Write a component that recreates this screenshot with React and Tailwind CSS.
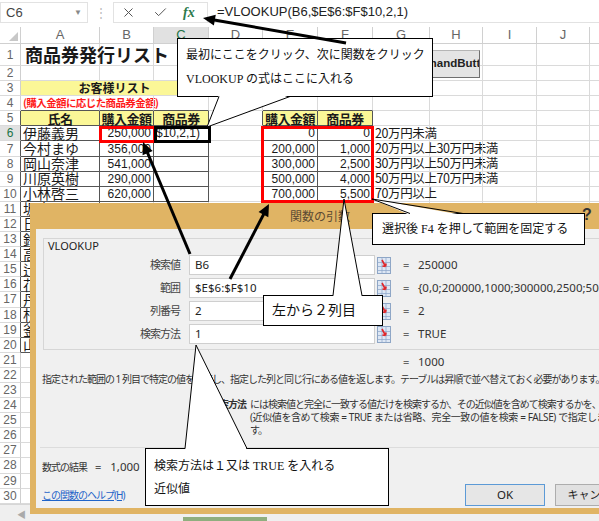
import { X, Check } from 'lucide-react';

const COLS = [
  { k: 'A', w: 'w-[79px]' },
  { k: 'B', w: 'w-[54px]' },
  { k: 'C', w: 'w-[55px]' },
  { k: 'D', w: 'w-[54px]' },
  { k: 'E', w: 'w-[55px]' },
  { k: 'F', w: 'w-[55px]' },
  { k: 'G', w: 'w-[57px]' },
  { k: 'H', w: 'w-[53px]' },
  { k: 'I', w: 'w-[54px]' },
  { k: 'J', w: 'w-[53px]' },
  { k: 'K', w: 'w-[40px]' },
];

const customers = [
  ['伊藤義男', '250,000'],
  ['今村まゆ', '356,000'],
  ['岡山奈津', '541,000'],
  ['川原英樹', '290,000'],
  ['小林啓三', '620,000'],
];

const rates = [
  ['0', '0', '20万円未満'],
  ['200,000', '1,000', '20万円以上30万円未満'],
  ['300,000', '2,500', '30万円以上50万円未満'],
  ['500,000', '4,000', '50万円以上70万円未満'],
  ['700,000', '5,500', '70万円以上'],
];

// rows 11-20 sit under the dialog, only the first glyph peeks out
const moreNames = ['坂本', '日野', '鈴木', '高橋', '辻', '花田', '丹羽', '杉山', '釜田', '山田'];

const NUM = "justify-end pr-[2px] font-['Liberation_Sans',sans-serif] text-[12px]";
const HEAD = 'bg-[#fbf797] justify-center font-bold text-[13px] tracking-[-0.5px]';

function inTable(r, ci) {
  if (ci <= 2 && r >= 5 && r <= 10) return true;
  if (ci === 0 && r >= 11 && r <= 20) return true;
  if ((ci === 4 || ci === 5) && r >= 5 && r <= 10) return true;
  return false;
}

function rowCells(r) {
  if (r === 1) return { A: { t: '商品券発行リスト', c: 'text-[18px] font-bold pl-[4px]' } };
  if (r === 3) return { A: { t: 'お客様リスト', c: 'bg-[#fbf797] justify-center font-bold text-[12px]', span: 3 } };
  if (r === 4)
    return { A: { t: '(購入金額に応じた商品券金額)', c: 'text-[10.5px] tracking-[-0.6px] text-[#ff1a1a] font-semibold pl-[2px]' } };
  if (r === 5)
    return {
      A: { t: '氏名', c: HEAD },
      B: { t: '購入金額', c: HEAD },
      C: { t: '商品券', c: HEAD },
      E: { t: '購入金額', c: HEAD },
      F: { t: '商品券', c: HEAD },
    };
  if (r >= 6 && r <= 10) {
    const [name, amount] = customers[r - 6];
    const [from, ticket, note] = rates[r - 6];
    return {
      A: { t: name, c: 'text-[14px] pl-[2px]' },
      B: { t: amount, c: NUM },
      C: r === 6 ? { t: '$10,2,1)', c: "font-['Liberation_Sans',sans-serif] text-[12px] pl-[2px]" } : null,
      E: { t: from, c: NUM },
      F: { t: ticket, c: NUM },
      G: { t: note, c: 'text-[12.5px] tracking-[-0.4px] pl-[2px]' },
    };
  }
  if (r >= 11 && r <= 20) return { A: { t: moreNames[r - 11], c: 'text-[14px] pl-[2px]' } };
  return {};
}

function SheetRow({ r }) {
  const cells = rowCells(r);
  const out = [];
  for (let i = 0; i < COLS.length; i++) {
    const cell = cells[COLS[i].k];
    const span = cell && cell.span ? cell.span : 1;
    const last = i + span - 1;
    const w = span === 3 ? 'w-[188px]' : COLS[i].w;
    const rightDark = inTable(r, last) || inTable(r, last + 1);
    const bottomDark = inTable(r, i) || inTable(r + 1, i);
    out.push(
      <div
        key={COLS[i].k}
        className={`shrink-0 flex items-center whitespace-nowrap border-r border-b ${w} ${
          rightDark ? 'border-r-[#555]' : 'border-r-[#dadada]'
        } ${bottomDark ? 'border-b-[#555]' : 'border-b-[#dadada]'} ${cell ? cell.c : ''}`}
      >
        {cell ? cell.t : ''}
      </div>
    );
    i += span - 1;
  }
  const active = r === 6;
  return (
    <div className={`flex ${r === 1 ? 'h-[22px]' : 'h-[15.1px]'}`}>
      <div
        className={`shrink-0 w-[21px] flex items-center justify-center border-r border-b border-b-[#dadada] font-['Liberation_Sans',sans-serif] text-[12px] ${
          inTable(r, 0) ? 'border-r-[#555]' : 'border-r-[#cfcfcf]'
        } ${active ? 'bg-[#e1e1e1] text-[#217346]' : 'text-[#666]'}`}
      >
        {r}
      </div>
      {out}
    </div>
  );
}

function FormulaBar() {
  return (
    <div className="h-[27px] flex items-start pt-[2px] font-['Liberation_Sans',sans-serif]">
      <div className="shrink-0 w-[88px] h-[21px] border border-[#e2e2e2] flex items-center justify-between pl-[5px] pr-[5px]">
        <span className="text-[13px] text-[#444]">C6</span>
        <span className="text-[8px] text-[#888]">▼</span>
      </div>
      <div className="shrink-0 w-[25px] h-[21px] flex items-center justify-center text-[12px] text-[#bbb]">⋮</div>
      <div className="shrink-0 w-[95px] h-[21px] border border-[#e2e2e2] flex items-center pl-[7px]">
        <X size={15} strokeWidth={1.6} className="text-[#555]" />
        <Check size={15} strokeWidth={1.6} className="ml-[17px] text-[#555]" />
        <span className="ml-[15px] font-['Liberation_Serif',serif] italic font-bold text-[14px] text-[#2c7a4b]">fx</span>
      </div>
      <div className="flex-1 h-[21px] border-b border-[#e2e2e2] flex items-center pl-[9px] text-[13px] text-[#222]">
        =VLOOKUP(B6,$E$6:$F$10,2,1)
      </div>
    </div>
  );
}

function ColumnHeader() {
  return (
    <div className="flex h-[17px] font-['Liberation_Sans',sans-serif]">
      <div className="shrink-0 w-[21px] border-r border-b border-[#d0d0d0] flex items-end justify-end pr-[2px] pb-[2px]">
        <svg width="9" height="9" viewBox="0 0 9 9">
          <polygon points="9,0 9,9 0,9" fill="#c8c8c8" />
        </svg>
      </div>
      {COLS.map((c) => (
        <div
          key={c.k}
          className={`shrink-0 ${c.w} border-r border-b border-[#d0d0d0] flex items-center justify-center text-[13px] ${
            c.k === 'C' ? 'bg-[#e1e1e1] text-[#217346]' : 'text-[#666]'
          }`}
        >
          {c.k}
        </div>
      ))}
    </div>
  );
}

function RefIcon() {
  return (
    <svg width="14" height="17" viewBox="0 0 14 17" className="shrink-0">
      <rect x="0.5" y="0.5" width="13" height="16" fill="#dde7f4" stroke="#8ea6c6" />
      <path d="M1 5.5h12M1 9.5h12M1 13.5h12M5 1v15M9 1v15" stroke="#8aa3c8" strokeWidth="0.7" />
      <path d="M5 3l3.5 6.5M8.5 9.5l-3 -0.5M8.5 9.5l0.5 -3" stroke="#e0262a" strokeWidth="1.6" fill="none" />
    </svg>
  );
}

function Dialog() {
  const args = [
    ['検索値', 'B6', '250000'],
    ['範囲', '$E$6:$F$10', '{0,0;200000,1000;300000,2500;500000,4000;700000,5500}'],
    ['列番号', '2', '2'],
    ['検索方法', '1', 'TRUE'],
  ];
  return (
    <div className="absolute left-[30px] top-[203px] w-[580px] h-[311px] flex flex-col bg-[#e0b464]">
      <div className="relative h-[26px] shrink-0 flex items-center justify-center">
        <span className="text-[12px] text-[#5b4a33]">関数の引数</span>
        <span className="absolute left-[552px] top-[0px] text-[16px] font-bold text-[#333] font-['Liberation_Sans',sans-serif]">?</span>
      </div>
      <div className="flex-1 ml-[6px] mb-[6px] bg-[#f0f0f0] flex flex-col text-[#333] font-['Noto_Sans','Noto_Sans_CJK_JP',sans-serif] overflow-hidden">
        <div className="ml-[7px] mt-[9px] mr-[-20px] h-[112px] shrink-0 border border-[#d6d6d6]">
          <div className="pl-[4px] h-[16px] text-[11px] leading-[14px] text-[#222]">VLOOKUP</div>
          <div className="flex flex-col gap-[3px]">
            {args.map(([label, input, value]) => (
              <div key={label} className="flex items-center h-[20px]">
                <div className="shrink-0 w-[136px] text-right text-[11px] tracking-[-1px] text-[#444]">{label}</div>
                <div className="shrink-0 ml-[9px] w-[186px] h-[20px] bg-white border border-[#cfcfcf] flex items-center pl-[5px] text-[11.5px] text-[#222]">
                  {input}
                </div>
                <div className="ml-[2px]">
                  <RefIcon />
                </div>
                <div className="shrink-0 ml-[12px] w-[15px] text-[11px] text-[#666]">=</div>
                <div className="text-[11.5px] whitespace-nowrap text-[#333]">{value}</div>
              </div>
            ))}
          </div>
        </div>
        <div className="mt-[5px] h-[14px] flex items-center pl-[367px] text-[11.5px]">
          <span className="w-[15px] text-[#666] text-[11px]">=</span>
          <span>1000</span>
        </div>
        <div className="mt-[3px] h-[14px] pl-[6px] flex items-center whitespace-nowrap text-[10px] tracking-[-1px]">
          指定された範囲の 1 列目で特定の値を検索し、指定した列と同じ行にある値を返します。テーブルは昇順で並べ替えておく必要があります。
        </div>
        <div className="mt-[12px] flex pl-[174px] text-[10px] tracking-[-1px] leading-[13px] whitespace-nowrap">
          <div className="shrink-0 w-[36px] text-right font-bold">検索方法</div>
          <div className="ml-[4px] flex flex-col">
            <span>には検索値と完全に一致する値だけを検索するか、その近似値を含めて検索するかを、</span>
            <span className="tracking-[-0.4px]">(近似値を含めて検索 = TRUE または省略、完全一致の値を検索 = FALSE) で指定しま</span>
            <span>す。</span>
          </div>
        </div>
        <div className="mt-[10px] ml-[4px] border-t border-[#dcdcdc]" />
        <div className="mt-[12px] h-[14px] pl-[6px] flex items-center">
          <span className="text-[10px] tracking-[-1px]">数式の結果</span>
          <span className="ml-[8px] text-[11px] text-[#555]">=</span>
          <span className="ml-[9px] text-[11.5px]">1,000</span>
        </div>
        <div className="mt-[10px] h-[22px] flex items-center">
          <div className="shrink-0 w-[429px] pl-[6px] text-[10px] tracking-[-1px] text-[#1f64c8] underline">この関数のヘルプ(H)</div>
          <div className="shrink-0 w-[80px] h-[22px] border border-[#5c9ad6] bg-[#e6e6e6] flex items-center justify-center text-[11.5px] text-[#222]">
            OK
          </div>
          <div className="shrink-0 ml-[10px] w-[80px] h-[22px] border border-[#adadad] bg-[#e1e1e1] flex items-center justify-center text-[11px] text-[#222]">
            キャンセル
          </div>
        </div>
      </div>
    </div>
  );
}

function Arrow({ x1, y1, x2, y2 }) {
  const dx = x2 - x1;
  const dy = y2 - y1;
  const len = Math.hypot(dx, dy);
  const ux = dx / len;
  const uy = dy / len;
  const hl = 12;
  const hw = 5.5;
  const bx = x2 - ux * hl;
  const by = y2 - uy * hl;
  const pts = `${x2},${y2} ${bx - uy * hw},${by + ux * hw} ${bx + uy * hw},${by - ux * hw}`;
  return (
    <g>
      <line x1={x1} y1={y1} x2={bx + ux * 2} y2={by + uy * 2} stroke="#000" strokeWidth="3" />
      <polygon points={pts} fill="#000" />
    </g>
  );
}

function Tail({ a, b, tip, y, up }) {
  const inner = up ? y + 1.5 : y - 1.5;
  return (
    <g>
      <polygon points={`${a},${inner} ${tip[0]},${tip[1]} ${b},${inner}`} fill="#fff" />
      <polyline points={`${a},${y} ${tip[0]},${tip[1]} ${b},${y}`} fill="none" stroke="#000" strokeWidth="1" />
    </g>
  );
}

const CALLOUT = "absolute bg-white border border-black font-['Liberation_Serif','Noto_Sans_CJK_JP',serif] text-[#111] whitespace-nowrap";

export default function App() {
  const rows = Array.from({ length: 30 }, (_, i) => i + 1);
  return (
    <div className="relative w-[599px] h-[521px] overflow-hidden bg-white text-[#1a1a1a] font-['Noto_Sans_CJK_JP',sans-serif]">
      <FormulaBar />
      <ColumnHeader />
      {rows.map((r) => (
        <SheetRow key={r} r={r} />
      ))}
      <div className="relative h-[18px] bg-[#efefef] border-t border-[#d6d6d6]">
        <span className="absolute left-[17px] top-[3px] text-[9px] text-[#aaa]">◀</span>
        <div className="absolute left-[183px] top-[12px] w-[84px] h-[6px] bg-[#8fae7e]" />
      </div>

      <div className="absolute left-[398px] top-[50px] w-[82px] h-[28px] bg-[#e4e4e4] border border-[#b5b5b5] border-r-[#6f6f6f] border-b-[#6f6f6f] overflow-hidden flex items-center pl-[2px] font-['Liberation_Sans',sans-serif] font-bold text-[11.5px] text-[#222] whitespace-nowrap">
        CommandButton1
      </div>

      <div className="absolute left-[99px] top-[126px] w-[57px] h-[17px] border-[3px] border-[#ff0000]" />
      <div className="absolute left-[154px] top-[126px] w-[57px] h-[17px] border-[3px] border-black" />
      <div className="absolute left-[261px] top-[126px] w-[113px] h-[77px] border-[3px] border-[#ff0000]" />

      <Dialog />

      <div className={`${CALLOUT} left-[177px] top-[38px] w-[256px] h-[59px] pl-[8px] pt-[4px] text-[12px] leading-[24px]`}>
        <div>最初にここをクリック、次に関数をクリック</div>
        <div>VLOOKUP の式はここに入れる</div>
      </div>
      <div className={`${CALLOUT} left-[372px] top-[213px] w-[213px] h-[32px] pl-[9px] pt-[6px] text-[12px] leading-[18px]`}>
        選択後 F4 を押して範囲を固定する
      </div>
      <div className={`${CALLOUT} left-[263px] top-[295px] w-[120px] h-[31px] pl-[8px] pt-[5px] text-[14px] leading-[20px]`}>
        左から２列目
      </div>
      <div className={`${CALLOUT} left-[145px] top-[448px] w-[244px] h-[58px] pl-[8px] pt-[6px] text-[12px] leading-[23px]`}>
        <div>検索方法は１又は TRUE を入れる</div>
        <div>近似値</div>
      </div>

      <svg className="absolute left-0 top-0 pointer-events-none" width="599" height="521" viewBox="0 0 599 521">
        <Tail a={219} b={290} tip={[207, 127]} y={96.5} up={false} />
        <Tail a={410} b={463} tip={[372, 199]} y={213.5} up />
        <Tail a={333} b={362} tip={[344, 199]} y={295.5} up />
        <Tail a={185} b={247} tip={[196, 345]} y={448.5} up />
        <Arrow x1={346} y1={43} x2={203} y2={18} />
        <Arrow x1={190} y1={254} x2={143} y2={142} />
        <Arrow x1={230} y1={279} x2={269} y2={204} />
      </svg>
    </div>
  );
}
